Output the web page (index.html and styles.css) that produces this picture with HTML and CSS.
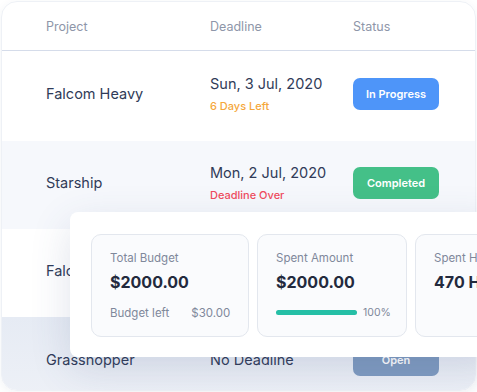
FILE: index.html
```html
<!DOCTYPE html>
<html lang="en">
<head>
    <meta charset="UTF-8">
    <meta name="viewport" content="width=device-width, initial-scale=1.0">
    <title>Projects</title>
    <link rel="stylesheet" href="styles.css">
</head>
<body>
    <div class="stage">
        <div class="projects">
            <div class="row head">
                <div>Project</div>
                <div>Deadline</div>
                <div>Status</div>
            </div>

            <div class="row">
                <div class="name">Falcom Heavy</div>
                <div class="deadline">
                    <div class="date">Sun, 3 Jul, 2020</div>
                    <div class="note left">6 Days Left</div>
                </div>
                <div><span class="badge progress">In Progress</span></div>
            </div>

            <div class="row shade">
                <div class="name">Starship</div>
                <div class="deadline">
                    <div class="date">Mon, 2 Jul, 2020</div>
                    <div class="note over">Deadline Over</div>
                </div>
                <div><span class="badge done">Completed</span></div>
            </div>

            <div class="row">
                <div class="name">Falcom 9</div>
                <div class="deadline">
                    <div class="date">Tue, 8 Jul, 2020</div>
                    <div class="note left">11 Days Left</div>
                </div>
                <div><span class="badge progress">In Progress</span></div>
            </div>

            <div class="row last">
                <div class="name">Grasshopper</div>
                <div class="deadline">
                    <div class="date">No Deadline</div>
                </div>
                <div><span class="badge open">Open</span></div>
            </div>
        </div>

        <!-- panel de resumen encima de la tabla -->
        <div class="summary">
            <div class="stat">
                <div class="label">Total Budget</div>
                <div class="value">$2000.00</div>
                <div class="foot">
                    <span>Budget left</span>
                    <span>$30.00</span>
                </div>
            </div>
            <div class="stat wide">
                <div class="label">Spent Amount</div>
                <div class="value">$2000.00</div>
                <div class="foot">
                    <div class="bar"><div class="fill" style="width: 100%"></div></div>
                    <span>100%</span>
                </div>
            </div>
            <div class="stat">
                <div class="label">Spent Hours</div>
                <div class="value">470 Hours</div>
            </div>
        </div>
    </div>
</body>
</html>
```
FILE: styles.css
```css
body {
    margin: 0;
    padding: 0;
    background: #fff;
    font-family: Inter, "Open Sans", sans-serif;
    overflow: hidden;
}

.stage {
    position: relative;
    width: 477px;
    height: 392px;
}

.projects {
    margin: 1px 1px 0 1px;
    height: 388px;
    border: 1px solid #eef1f6;
    border-radius: 16px;
    overflow: hidden;
    box-shadow: 0 2px 10px rgba(40, 60, 110, 0.06);
}

.row {
    display: grid;
    grid-template-columns: 164px 143px 1fr;
    align-items: center;
    box-sizing: border-box;
    padding: 0 0 5px 44px;
    height: 88px;
    color: #303b58;
}

.row.head {
    height: 49px;
    padding-bottom: 0;
    border-bottom: 1px solid #d5dcea;
    color: #8e96a9;
    font-size: 12.5px;
}

.row.head + .row {
    height: 90px;
}

.shade {
    background-color: #f6f8fc;
}

.last {
    background: linear-gradient(180deg, #e6ebf4 0%, #eef1f7 100%);
    height: 88px;
    padding-bottom: 3px;
}

.name {
    font-size: 14.5px;
}

.date {
    font-size: 14.5px;
}

.note {
    margin-top: 7px;
    font-size: 11px;
    font-weight: 500;
}

.note.left {
    color: #f5a73b;
}

.note.over {
    color: #f04c5e;
}

.badge {
    display: inline-flex;
    align-items: center;
    justify-content: center;
    width: 86px;
    height: 32px;
    border-radius: 7px;
    color: white;
    font-size: 11px;
    font-weight: 600;
}

.progress {
    background-color: #4e95f9;
}

.done {
    background-color: #44c088;
}

.open {
    background-color: #7f9bc0;
}

.summary {
    position: absolute;
    left: 70px;
    top: 211px;
    width: 430px;
    height: 145px;
    box-sizing: border-box;
    padding: 22px 0 20px 21px;
    display: flex;
    gap: 8px;
    background: white;
    border-radius: 8px;
    box-shadow: 0 12px 40px rgba(60, 80, 130, 0.16);
}

.stat {
    flex: 0 0 158px;
    box-sizing: border-box;
    padding: 16px 0 0 18px;
    border: 1.5px solid #e3e7ee;
    border-radius: 10px;
    background-color: #fafbfd;
    color: #7f889b;
    white-space: nowrap;
    overflow: hidden;
}

.stat.wide {
    flex-basis: 150px;
}

.label {
    font-size: 11.5px;
}

.value {
    margin-top: 7px;
    font-size: 16px;
    font-weight: 700;
    color: #232a3d;
}

.foot {
    display: flex;
    align-items: center;
    gap: 22px;
    margin-top: 14px;
    font-size: 11.5px;
}

.stat.wide .foot {
    gap: 6px;
    font-size: 10.5px;
}

.bar {
    width: 81px;
    height: 5px;
    border-radius: 3px;
    background-color: #e4e9f0;
}

.fill {
    height: 100%;
    border-radius: 3px;
    background-color: #25bfa6;
}
```
